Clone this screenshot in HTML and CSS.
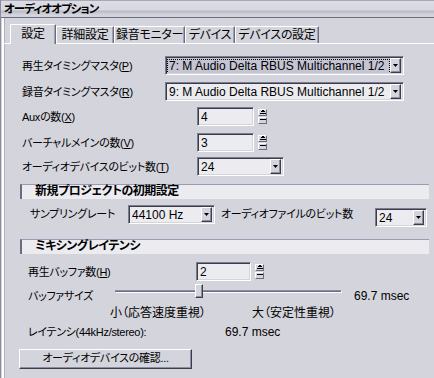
FILE: index.html
```html
<!DOCTYPE html>
<html lang="ja">
<head>
<meta charset="utf-8">
<link rel="stylesheet" href="styles.css">
</head>
<body>
<div class="win">
  <div class="title">オーディオオプション</div>
  <div class="body">
    <div class="tabs">
      <div class="tab sel">設定</div>
      <div class="tab w1">詳細設定</div>
      <div class="tab w2">録音モニター</div>
      <div class="tab w3">デバイス</div>
      <div class="tab w4">デバイスの設定</div>
    </div>
    <div class="panel">
      <div class="row r1">
        <span class="lab jp">再生タイミングマスタ(<u>P</u>)</span>
        <div class="select wide focus"><span class="val"><span class="dots">7: M Audio Delta RBUS Multichannel 1/2</span></span><span class="arrow"><svg width="5" height="3" viewBox="0 0 5 3"><path d="M0 0h5L2.5 3z" fill="#000"/></svg></span></div>
      </div>
      <div class="row r2">
        <span class="lab jp">録音タイミングマスタ(<u>R</u>)</span>
        <div class="select wide"><span class="val">9: M Audio Delta RBUS Multichannel 1/2</span><span class="arrow"><svg width="5" height="3" viewBox="0 0 5 3"><path d="M0 0h5L2.5 3z" fill="#000"/></svg></span></div>
      </div>
      <div class="row r3">
        <span class="lab jp">Auxの数(<u>X</u>)</span>
        <div class="input num">4</div>
        <div class="spin"><span class="sb up"><svg width="6" height="4" viewBox="0 0 6 4"><path d="M2 0h2v1H2zM1 1h4v1H1zM0 3h6v1H0z" fill="#000"/></svg></span><span class="sb dn"><svg width="6" height="2" viewBox="0 0 6 2"><path d="M0 0h6v1H0z" fill="#000"/></svg></span></div>
      </div>
      <div class="row r4">
        <span class="lab jp">バーチャルメインの数(<u>V</u>)</span>
        <div class="input num">3</div>
        <div class="spin"><span class="sb up"><svg width="6" height="4" viewBox="0 0 6 4"><path d="M2 0h2v1H2zM1 1h4v1H1zM0 3h6v1H0z" fill="#000"/></svg></span><span class="sb dn"><svg width="6" height="2" viewBox="0 0 6 2"><path d="M0 0h6v1H0z" fill="#000"/></svg></span></div>
      </div>
      <div class="row r5">
        <span class="lab jp">オーディオデバイスのビット数(<u>T</u>)</span>
        <div class="select bits"><span class="val">24</span><span class="arrow"><svg width="5" height="3" viewBox="0 0 5 3"><path d="M0 0h5L2.5 3z" fill="#000"/></svg></span></div>
      </div>

      <div class="group g1">新規プロジェクトの初期設定</div>
      <div class="row rs">
        <span class="lab2 jp">サンプリングレート</span>
        <div class="select rate"><span class="val">44100 Hz</span><span class="arrow"><svg width="5" height="3" viewBox="0 0 5 3"><path d="M0 0h5L2.5 3z" fill="#000"/></svg></span></div>
        <span class="lab3 jp">オーディオファイルのビット数</span>
        <div class="select fbits"><span class="val">24</span><span class="arrow"><svg width="5" height="3" viewBox="0 0 5 3"><path d="M0 0h5L2.5 3z" fill="#000"/></svg></span></div>
      </div>

      <div class="group g2">ミキシングレイテンシ</div>
      <div class="row rb">
        <span class="lab4 jp">再生バッファ数(<u>H</u>)</span>
        <div class="input num2">2</div>
        <div class="spin"><span class="sb up"><svg width="6" height="4" viewBox="0 0 6 4"><path d="M2 0h2v1H2zM1 1h4v1H1zM0 3h6v1H0z" fill="#000"/></svg></span><span class="sb dn"><svg width="6" height="2" viewBox="0 0 6 2"><path d="M0 0h6v1H0z" fill="#000"/></svg></span></div>
      </div>
      <div class="row rsl">
        <span class="lab5 jp">バッファサイズ</span>
        <div class="slider"><div class="track"></div><div class="thumb"></div></div>
        <span class="msec">69.7 msec</span>
      </div>
      <div class="row scale">
        <span class="small">小（応答速度重視）</span>
        <span class="large">大（安定性重視）</span>
      </div>
      <div class="row lat">
        <span class="lab6 jp">レイテンシ(44kHz/stereo):</span>
        <span class="latv">69.7 msec</span>
      </div>
      <div class="row rbtn">
        <div class="btn jp">オーディオデバイスの確認...</div>
      </div>
    </div>
  </div>
</div>
</body>
</html>
```

FILE: styles.css
```css
* { box-sizing: border-box; }
html, body {
  margin: 0;
  padding: 0;
  width: 434px;
  height: 378px;
  overflow: hidden;
  background: #d4d4dc;
}
body {
  font-family: "Liberation Sans", "Noto Sans CJK JP", sans-serif;
  font-size: 12px;
  line-height: 14px;
  color: #000;
  font-feature-settings: "palt";
}
u { text-decoration: underline; text-underline-offset: 1px; }
.jp { font-size: 11px; letter-spacing: -0.3px; }

.win {
  height: 378px;
  border-left: 1px solid #8c8ca0;
}
.title {
  height: 18px;
  padding-left: 3px;
  font-weight: bold;
  font-size: 11.5px;
  line-height: 18px;
  letter-spacing: -1px;
  background: linear-gradient(#a8a8b8 0, #a8a8b8 1px, #dcdce4 1px, #d8d8e0 10px, #b8b8c6 11px, #c8c8d4 13px, #d4d4dc 15px);
  border-bottom: 1px solid #6c6c80;
}
.body {
  border-left: 2px solid #ffffff;
  margin-left: 1px;
  height: 360px;
  box-shadow: inset 1px 0 0 #b0b0c0;
}
.tabs {
  display: flex;
  align-items: flex-end;
  height: 25px;
  padding-left: 6px;
}
.tab {
  height: 17px;
  border-top: 1px solid #ffffff;
  border-left: 1px solid #ffffff;
  border-right: 1px solid #6c6c80;
  text-align: center;
  line-height: 16px;
  font-size: 12px;
  letter-spacing: -0.3px;
  box-shadow: inset -1px 0 0 #a0a0b0;
}
.tab.sel {
  width: 46px;
  height: 20px;
  margin-bottom: -1px;
  background: #d4d4dc;
  position: relative;
  z-index: 1;
  line-height: 18px;
}
.w1 { width: 58px; }
.w2 { width: 71px; }
.w3 { width: 50px; }
.w4 { width: 84px; }

.panel {
  border-top: 1px solid #ffffff;
  height: 335px;
}
.row {
  display: flex;
  align-items: center;
  height: 19px;
}
.r1 { margin-top: 12px; }
.r2 { margin-top: 7px; }
.r3 { margin-top: 6px; }
.r4 { margin-top: 7px; }
.r5 { margin-top: 5px; }

.lab {
  width: 161px;
  padding-left: 18px;
  flex: none;
  white-space: nowrap;
}

.select, .input {
  height: 19px;
  background: #ececf0;
  border-top: 1px solid #7c7c90;
  border-left: 1px solid #7c7c90;
  border-right: 1px solid #ffffff;
  border-bottom: 1px solid #ffffff;
  box-shadow: inset 1px 1px 0 #3c3c4c, inset -1px -1px 0 #d4d4dc;
  display: flex;
  align-items: center;
  flex: none;
}
.select .val {
  flex: 1;
  padding-left: 3px;
  white-space: nowrap;
  overflow: hidden;
}
.select .arrow {
  width: 11px;
  height: 15px;
  margin-right: 2px;
  background: #d4d4dc;
  border-top: 1px solid #ffffff;
  border-left: 1px solid #ffffff;
  border-right: 1px solid #3c3c4c;
  border-bottom: 1px solid #3c3c4c;
  box-shadow: inset -1px -1px 0 #8c8ca0;
  display: flex;
  align-items: center;
  justify-content: center;
}
.wide { width: 239px; }
.focus { background: #c4c4d2; }
.focus .val { padding-left: 2px; }
.dots {
  display: inline-block;
  outline: 1px dotted #000;
  outline-offset: 0;
  padding: 0 1px;
  line-height: 13px;
  width: 221px;
}
.bits { width: 87px; margin-left: 32px; }

.num { width: 57px; margin-left: 32px; padding-left: 3px; }
.num2 { width: 55px; padding-left: 3px; }
.spin {
  display: flex;
  flex-direction: column;
  gap: 1px;
  margin-left: 4px;
  height: 16px;
}
.sb {
  width: 9px;
  height: 7px;
  background: #d4d4dc;
  border-top: 1px solid #ffffff;
  border-left: 1px solid #ffffff;
  border-right: 1px solid #6c6c80;
  border-bottom: 1px solid #6c6c80;
  display: flex;
  align-items: center;
  justify-content: center;
}

.group {
  margin-left: 16px;
  width: 409px;
  height: 15px;
  background: #ececf0;
  border-top: 1px solid #9a9ab4;
  border-left: 2px solid #6c6c80;
  padding-left: 13px;
  font-weight: bold;
  font-size: 12px;
  line-height: 13px;
  letter-spacing: -0.5px;
}
.g1 { margin-top: 8px; }
.g2 { margin-top: 12px; }

.rs {
  margin-top: 6px;
  height: 22px;
  align-items: flex-start;
}
.rs > span { line-height: 19px; }
.lab2 { width: 124px; padding-left: 26px; flex: none; }
.rate { width: 87px; }
.lab3 { margin-left: 6px; width: 154px; flex: none; }
.fbits { width: 52px; margin-top: 3px; }

.rb { margin-top: 8px; }
.lab4 { width: 192px; padding-left: 24px; flex: none; }

.rsl { margin-top: 3px; height: 16px; align-items: flex-start; }
.lab5 { width: 111px; padding-left: 24px; flex: none; line-height: 14px; margin-top: 5px; }
.slider {
  position: relative;
  width: 227px;
  height: 16px;
  flex: none;
}
.track {
  position: absolute;
  left: 0;
  right: 0;
  top: 6px;
  height: 3px;
  border-top: 1px solid #8c8ca0;
  border-left: 1px solid #8c8ca0;
  background: #6c6c80;
  border-bottom: 1px solid #ffffff;
  border-right: 1px solid #ffffff;
}
.thumb {
  position: absolute;
  left: 80px;
  top: 0;
  width: 8px;
  height: 14px;
  background: #d4d4dc;
  border-top: 1px solid #ffffff;
  border-left: 1px solid #ffffff;
  border-right: 1px solid #3c3c4c;
  border-bottom: 1px solid #3c3c4c;
  box-shadow: inset -1px -1px 0 #8c8ca0;
}
.msec { margin-left: 12px; margin-top: 5px; line-height: 14px; }

.scale { margin-top: 6px; height: 14px; }
.small { margin-left: 106px; width: 142px; flex: none; }

.lat { margin-top: 5px; height: 14px; }
.lab6 { width: 221px; padding-left: 24px; flex: none; }

.rbtn { margin-top: 10px; height: 20px; }
.btn {
  margin-left: 15px;
  width: 173px;
  height: 20px;
  background: #d4d4dc;
  border-top: 1px solid #ffffff;
  border-left: 1px solid #ffffff;
  border-right: 1px solid #3c3c4c;
  border-bottom: 1px solid #3c3c4c;
  box-shadow: inset -1px -1px 0 #8c8ca0;
  text-align: center;
  line-height: 17px;
}
```
